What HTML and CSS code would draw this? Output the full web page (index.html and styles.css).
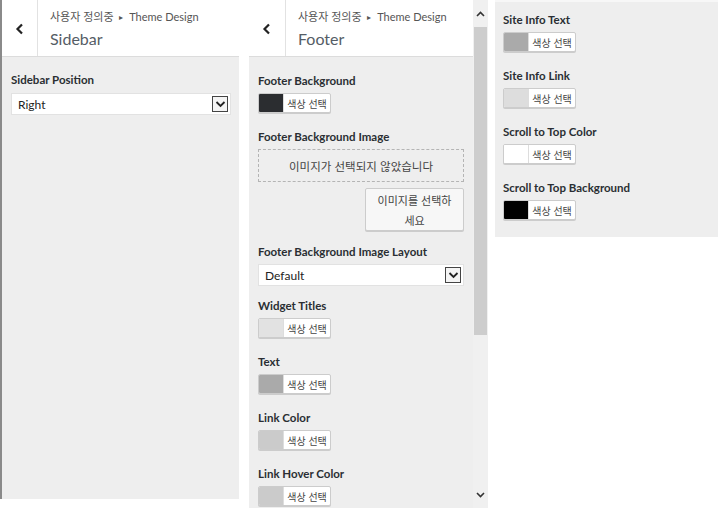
FILE: index.html
```html
<!DOCTYPE html>
<html lang="ko">
<head>
<meta charset="utf-8">
<link rel="stylesheet" href="styles.css">
</head>
<body>
<div class="panel panel-left">
  <div class="head">
    <div class="back"><svg width="10" height="12" viewBox="0 0 10 12"><path d="M7 1.5 L2.5 6 L7 10.5" fill="none" stroke="#222" stroke-width="2.2"/></svg></div>
    <div class="titles">
      <div class="crumb">사용자 정의중 <span class="tri">▸</span> Theme Design</div>
      <div class="title">Sidebar</div>
    </div>
  </div>
  <div class="body">
    <div class="field field-sel">
      <div class="label">Sidebar Position</div>
      <div class="select"><span>Right</span><span class="arrow"><svg width="11" height="8" viewBox="0 0 11 8"><path d="M1.5 2 L5.5 6 L9.5 2" fill="none" stroke="#222" stroke-width="1.8"/></svg></span></div>
    </div>
  </div>
</div>

<div class="panel panel-mid">
  <div class="mid-main">
    <div class="head">
      <div class="back"><svg width="10" height="12" viewBox="0 0 10 12"><path d="M7 1.5 L2.5 6 L7 10.5" fill="none" stroke="#222" stroke-width="2.2"/></svg></div>
      <div class="titles">
        <div class="crumb">사용자 정의중 <span class="tri">▸</span> Theme Design</div>
        <div class="title">Footer</div>
      </div>
    </div>
    <div class="body">
      <div class="field">
        <div class="label">Footer Background</div>
        <div class="color"><span class="sw sw-dark"></span><span class="ct">색상 선택</span></div>
      </div>
      <div class="field field-img">
        <div class="label">Footer Background Image</div>
        <div class="placeholder">이미지가 선택되지 않았습니다</div>
        <div class="btn-row"><div class="btn">이미지를 선택하<br>세요</div></div>
      </div>
      <div class="field field-sel">
        <div class="label">Footer Background Image Layout</div>
        <div class="select"><span>Default</span><span class="arrow"><svg width="11" height="8" viewBox="0 0 11 8"><path d="M1.5 2 L5.5 6 L9.5 2" fill="none" stroke="#222" stroke-width="1.8"/></svg></span></div>
      </div>
      <div class="field">
        <div class="label">Widget Titles</div>
        <div class="color"><span class="sw sw-e0"></span><span class="ct">색상 선택</span></div>
      </div>
      <div class="field">
        <div class="label">Text</div>
        <div class="color"><span class="sw sw-aa"></span><span class="ct">색상 선택</span></div>
      </div>
      <div class="field">
        <div class="label">Link Color</div>
        <div class="color"><span class="sw sw-cc"></span><span class="ct">색상 선택</span></div>
      </div>
      <div class="field">
        <div class="label">Link Hover Color</div>
        <div class="color"><span class="sw sw-cc"></span><span class="ct">색상 선택</span></div>
      </div>
    </div>
  </div>
  <div class="scrollbar">
    <div class="sb-btn"><svg width="9" height="6" viewBox="0 0 9 6"><path d="M1 5 L4.5 1.5 L8 5" fill="none" stroke="#333" stroke-width="1.6"/></svg></div>
    <div class="sb-thumb"></div>
    <div class="sb-track"></div>
    <div class="sb-btn"><svg width="9" height="6" viewBox="0 0 9 6"><path d="M1 1 L4.5 4.5 L8 1" fill="none" stroke="#333" stroke-width="1.6"/></svg></div>
  </div>
</div>

<div class="panel panel-right">
  <div class="body">
    <div class="field">
      <div class="label">Site Info Text</div>
      <div class="color"><span class="sw sw-aa"></span><span class="ct">색상 선택</span></div>
    </div>
    <div class="field">
      <div class="label">Site Info Link</div>
      <div class="color"><span class="sw sw-dd"></span><span class="ct">색상 선택</span></div>
    </div>
    <div class="field">
      <div class="label">Scroll to Top Color</div>
      <div class="color"><span class="sw sw-ff"></span><span class="ct">색상 선택</span></div>
    </div>
    <div class="field">
      <div class="label">Scroll to Top Background</div>
      <div class="color"><span class="sw sw-00"></span><span class="ct">색상 선택</span></div>
    </div>
  </div>
</div>
</body>
</html>
```

FILE: styles.css
```css
html, body {
  margin: 0;
  padding: 0;
  background: #fff;
  overflow: hidden;
}
body {
  display: flex;
  align-items: flex-start;
  font-family: "Lato", "Noto Sans CJK KR", sans-serif;
  color: #23282d;
}
.panel {
  background: #eeeeee;
  box-sizing: border-box;
  overflow: hidden;
}
.panel-left {
  width: 239px;
  height: 499px;
  border-left: 2px solid #8a8a8a;
}
.panel-mid {
  width: 239px;
  height: 508px;
  margin-left: 10px;
  display: flex;
}
.panel-right {
  width: 223px;
  height: 237px;
  margin-left: 7px;
  border-top: 2px solid #f7f7f7;
}
.mid-main {
  flex: 1;
  min-width: 0;
  overflow: hidden;
}
.head {
  height: 56px;
  background: #fff;
  border-bottom: 1px solid #dcdcdc;
  display: flex;
}
.back {
  width: 37px;
  border-right: 1px solid #e2e2e2;
  display: flex;
  align-items: center;
  justify-content: center;
  padding-top: 2px;
  box-sizing: border-box;
}
.panel-left .back { width: 36px; }
.titles {
  padding: 8px 0 0 12px;
}
.crumb {
  font-family: "Lato", "Noto Sans CJK KR", sans-serif;
  font-size: 11px;
  color: #555;
  line-height: 18px;
}
.tri {
  font-size: 8px;
  margin: 0 3px;
  vertical-align: 1px;
}
.title {
  font-family: "Lato", "Noto Sans", sans-serif;
  font-size: 16px;
  color: #555d66;
  line-height: 24px;
  margin-top: 1px;
}
.body {
  padding: 16px 0 0 9px;
}
.panel-right .body {
  padding: 10px 0 0 8px;
}
.field {
  margin-bottom: 16px;
}
.field-img {
  margin-bottom: 13px;
}
.field-sel {
  margin-bottom: 12px;
}
.label {
  font-family: "Lato", "Noto Sans", sans-serif;
  font-weight: 700;
  font-size: 11.5px;
  line-height: 16px;
  height: 16px;
  color: #2a2e33;
  margin-bottom: 4px;
}
.panel-left .field-sel {
  margin-top: -1px;
}
.panel-left .field-sel .label {
  margin-bottom: 5px;
}
.select {
  width: 220px;
  height: 22px;
  background: #fff;
  border: 1px solid #e2e2e2;
  box-sizing: border-box;
  display: flex;
  align-items: center;
  justify-content: space-between;
  padding: 0 2px 0 6px;
  font-family: "Lato", sans-serif;
  font-size: 12px;
  color: #222;
}
.panel-mid .select {
  width: 206px;
}
.arrow {
  width: 16px;
  height: 16px;
  border: 1px solid #444;
  box-sizing: border-box;
  display: flex;
  align-items: center;
  justify-content: center;
  background: #f4f4f4;
}
.color {
  display: flex;
  height: 20px;
  width: 73px;
  border: 1px solid #ccc;
  border-radius: 2px;
  box-sizing: border-box;
  background: #fff;
  box-shadow: 0 1px 0 #ccc;
  overflow: hidden;
}
.sw {
  width: 24px;
  height: 100%;
}
.sw-dark { background: #2b2d30; }
.sw-e0 { background: #e2e2e2; }
.sw-aa { background: #aaaaaa; }
.sw-cc { background: #cbcbcb; }
.sw-dd { background: #dddddd; }
.sw-ff { background: #ffffff; }
.sw-00 { background: #000000; }
.ct {
  flex: 1;
  border-left: 1px solid #ddd;
  font-family: "Noto Sans CJK KR", sans-serif;
  font-size: 10px;
  color: #444;
  display: flex;
  align-items: center;
  justify-content: center;
}
.placeholder {
  width: 206px;
  height: 33px;
  border: 1px dashed #b4b4b4;
  box-sizing: border-box;
  display: flex;
  align-items: center;
  justify-content: center;
  font-family: "Noto Sans CJK KR", sans-serif;
  font-size: 11.5px;
  color: #444;
}
.btn-row {
  width: 206px;
  display: flex;
  justify-content: flex-end;
  margin-top: 6px;
}
.btn {
  width: 99px;
  height: 43px;
  box-sizing: border-box;
  background: #f7f7f7;
  border: 1px solid #ccc;
  border-radius: 2px;
  box-shadow: 0 1px 0 #ccc;
  font-family: "Noto Sans CJK KR", sans-serif;
  font-size: 11px;
  line-height: 20px;
  color: #444;
  text-align: center;
  padding-top: 1px;
}
.scrollbar {
  width: 15px;
  background: #f0f0f0;
  display: flex;
  flex-direction: column;
}
.sb-btn {
  height: 27px;
  display: flex;
  align-items: center;
  justify-content: center;
}
.sb-thumb {
  height: 308px;
  margin: 0 1px;
  background: #cdcdcd;
}
.sb-track {
  flex: 1;
}
```
